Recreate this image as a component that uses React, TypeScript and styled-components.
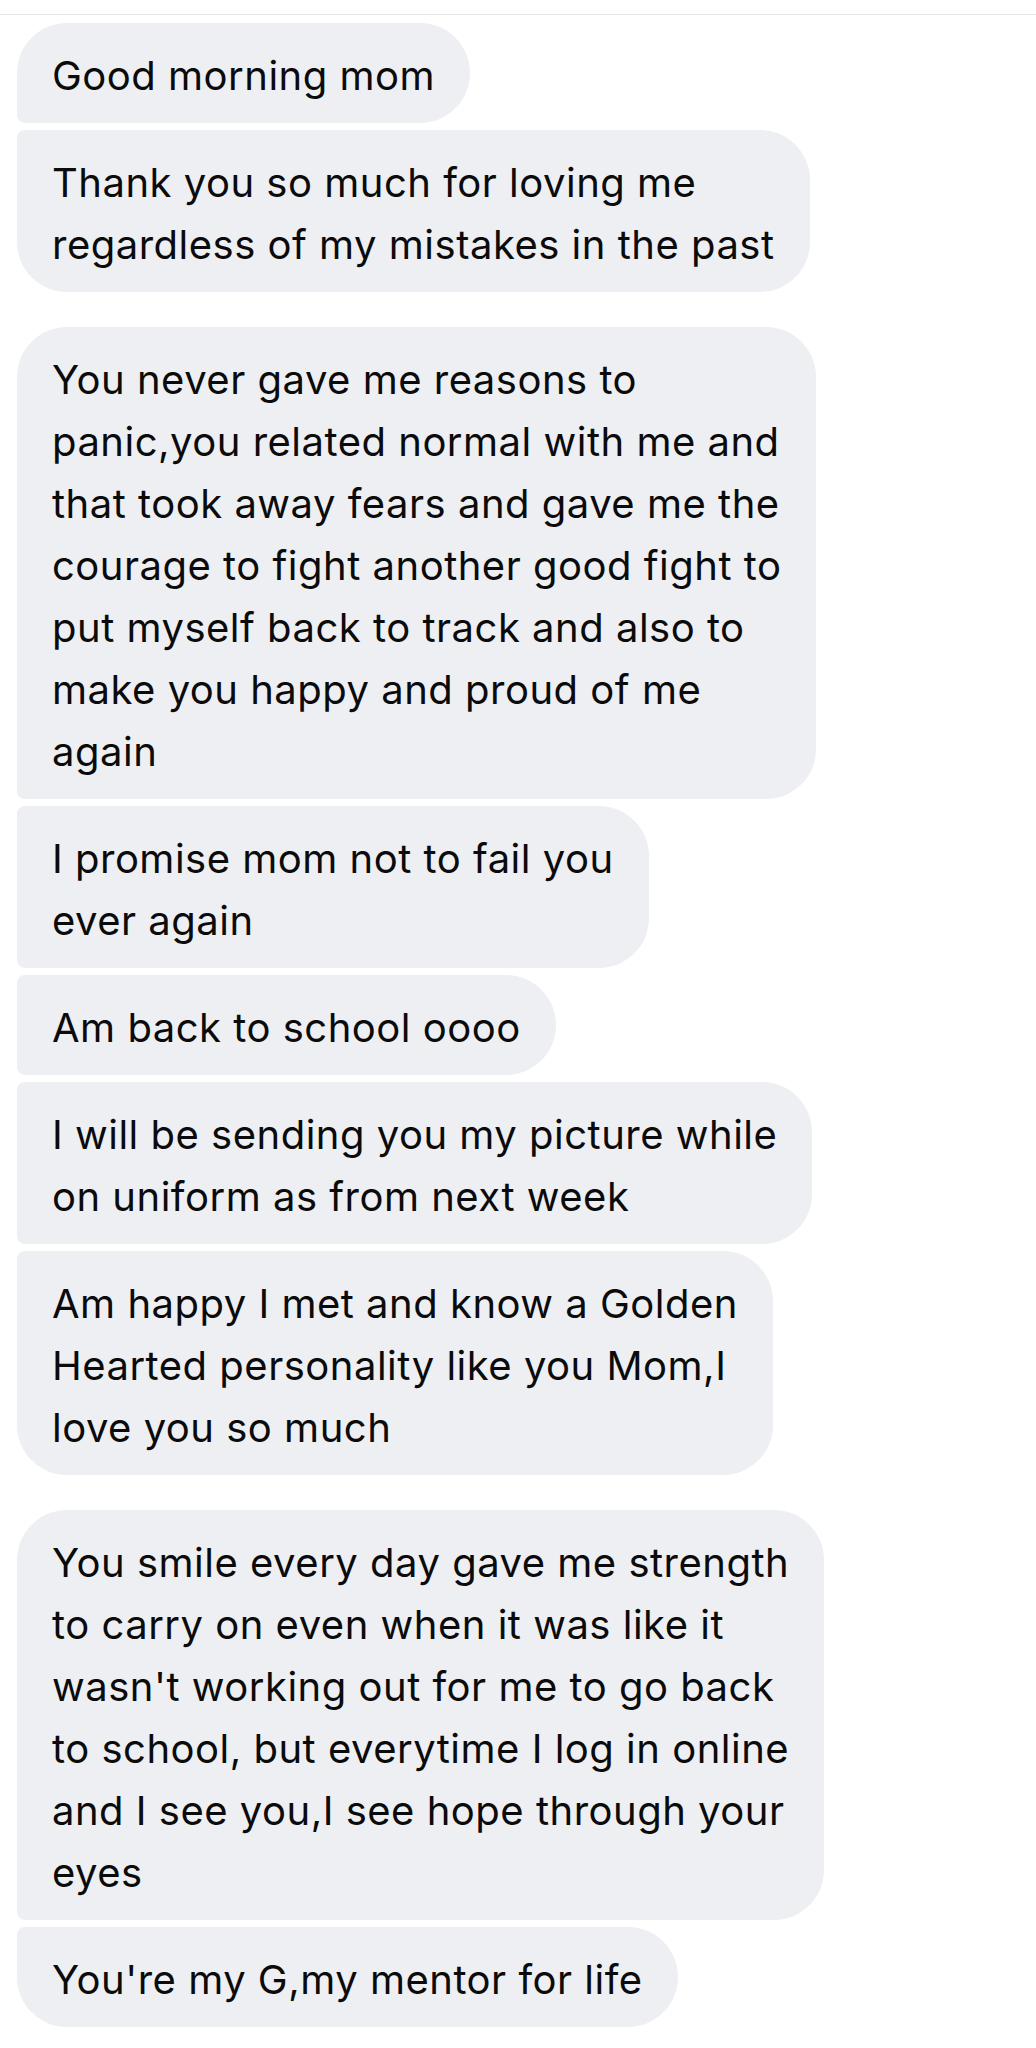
import React from "react";
import styled, { createGlobalStyle, css } from "styled-components";

const GlobalStyle = createGlobalStyle`
  html, body {
    margin: 0;
    padding: 0;
    background: #ffffff;
  }
  body {
    font-family: Inter, "Noto Sans", "Liberation Sans", sans-serif;
    -webkit-font-smoothing: antialiased;
  }
`;

const Page = styled.div`
  width: 1036px;
  min-height: 2048px;
  background: #ffffff;
  padding-top: 14px;
  box-sizing: border-box;
`;

const Divider = styled.div`
  height: 1px;
  background: #e6e6ea;
`;

const Thread = styled.div`
  display: flex;
  flex-direction: column;
  gap: 35px;
  padding: 8px 17px 0;
`;

const Group = styled.div`
  display: flex;
  flex-direction: column;
  align-items: flex-start;
  gap: 7px;
`;

type Pos = "first" | "middle" | "last" | "single";

const Bubble = styled.div<{ $pos: Pos }>`
  box-sizing: border-box;
  width: fit-content;
  background: #eeeff3;
  color: #0b0b0b;
  font-family: Inter, "Noto Sans", "Liberation Sans", sans-serif;
  font-size: 40px;
  line-height: 62px;
  letter-spacing: 0.5px;
  padding: 22px 35px 16px;
  white-space: nowrap;
  border-radius: 50px;
  ${({ $pos }) =>
    $pos === "first" &&
    css`
      border-bottom-left-radius: 8px;
    `}
  ${({ $pos }) =>
    $pos === "middle" &&
    css`
      border-top-left-radius: 8px;
      border-bottom-left-radius: 8px;
    `}
  ${({ $pos }) =>
    $pos === "last" &&
    css`
      border-top-left-radius: 8px;
    `}
`;

const Line = styled.span`
  display: block;
`;

const groups: string[][][] = [
  [
    ["Good morning mom"],
    ["Thank you so much for loving me", "regardless of my mistakes in the past"],
  ],
  [
    [
      "You never gave me reasons to",
      "panic,you related normal with me and",
      "that took away fears and gave me the",
      "courage to fight another good fight to",
      "put myself back to track and also to",
      "make you happy and proud of me",
      "again",
    ],
    ["I promise mom not to fail you", "ever again"],
    ["Am back to school oooo"],
    ["I will be sending you my picture while", "on uniform as from next week"],
    [
      "Am happy I met and know a Golden",
      "Hearted personality like you Mom,I",
      "love you so much",
    ],
  ],
  [
    [
      "You smile every day gave me strength",
      "to carry on even when it was like it",
      "wasn't working out for me to go back",
      "to school, but everytime I log in online",
      "and I see you,I see hope through your",
      "eyes",
    ],
    ["You're my G,my mentor for life"],
  ],
];

function posOf(i: number, n: number): Pos {
  if (n === 1) return "single";
  if (i === 0) return "first";
  if (i === n - 1) return "last";
  return "middle";
}

export default function App() {
  return (
    <Page>
      <GlobalStyle />
      <Divider />
      <Thread>
        {groups.map((g, gi) => (
          <Group key={gi}>
            {g.map((lines, i) => (
              <Bubble key={i} $pos={posOf(i, g.length)}>
                {lines.map((l, li) => (
                  <Line key={li}>{l}</Line>
                ))}
              </Bubble>
            ))}
          </Group>
        ))}
      </Thread>
    </Page>
  );
}
